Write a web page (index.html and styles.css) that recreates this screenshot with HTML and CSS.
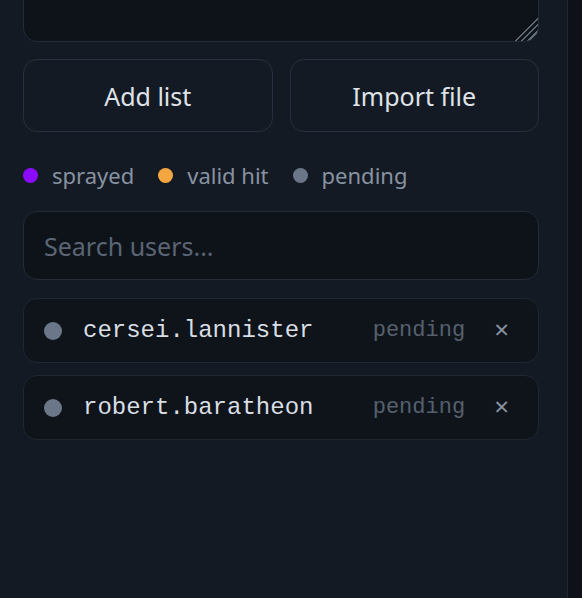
FILE: index.html
```html
<!doctype html>
<html>
<head>
<meta charset="utf-8">
<title>Targets</title>
<link rel="stylesheet" href="styles.css">
</head>
<body>
<div class="layout">
	<aside class="panel">
		<textarea class="bulk" spellcheck="false"></textarea>

		<div class="actions">
			<button class="btn">Add list</button>
			<button class="btn">Import file</button>
		</div>

		<ul class="legend">
			<li><span class="dot sprayed"></span>sprayed</li>
			<li><span class="dot hit"></span>valid hit</li>
			<li><span class="dot pending"></span>pending</li>
		</ul>

		<input class="search" type="text" placeholder="Search users...">

		<ul class="users">
			<li class="user">
				<span class="dot big pending"></span>
				<span class="name">cersei.lannister</span>
				<span class="state">pending</span>
				<button class="remove">×</button>
			</li>
			<li class="user">
				<span class="dot big pending"></span>
				<span class="name">robert.baratheon</span>
				<span class="state">pending</span>
				<button class="remove">×</button>
			</li>
		</ul>
	</aside>
	<div class="gutter"></div>
</div>
</body>
</html>
```

FILE: styles.css
```css
html, body{
	margin: 0;
	height: 100%;
	background: #141a23;
	overflow: hidden;
}

body{
	font-family: "Noto Sans", "Open Sans", sans-serif;
	color: #dfe3e9;
}

.layout{
	display: flex;
	height: 100%;
}

.panel{
	width: 568px;
	box-sizing: border-box;
	padding: 0 28px 0 23px;
	border-right: 1px solid #1f2732;
	background: #141a23;
}

.gutter{
	flex: 1;
	background: #0e1218;
}

/* paste box for the user list, scrolled past its top;
   the grip is drawn by hand: a triangle of the box colour over stripes */
.bulk{
	display: block;
	width: 100%;
	height: 62px;
	margin: -20px 0 0;
	box-sizing: border-box;
	background-color: #0e131a;
	background-image:
		linear-gradient(135deg, #0e131a 0 52%, transparent 52%),
		repeating-linear-gradient(135deg, transparent 0 3px, #626b78 3px 4.6px);
	background-size: 24px 24px;
	background-position: right 0 bottom 0;
	background-repeat: no-repeat;
	border: 1px solid #232c37;
	border-radius: 14px;
	color: #dfe3e9;
	resize: none;
	outline: none;
}

.actions{
	display: grid;
	grid-template-columns: 1fr 1fr;
	gap: 17px;
	margin-top: 17px;
}

.btn{
	height: 73px;
	background: #141a23;
	border: 1px solid #263040;
	border-radius: 14px;
	color: #dfe3e9;
	font-family: inherit;
	font-size: 25px;
}

.legend{
	display: flex;
	align-items: center;
	gap: 24px;
	height: 30px;
	margin: 28px 0 0;
	padding: 0;
	list-style: none;
	font-size: 22px;
	color: #8893a2;
}

.legend li{
	display: flex;
	align-items: center;
	gap: 14px;
}

.dot{
	width: 15px;
	height: 15px;
	border-radius: 50%;
	flex: none;
}

.dot.big{
	width: 18px;
	height: 18px;
}

.sprayed{ background: #8a0bff; }
.hit{ background: #f4a641; }
.pending{ background: #6b7788; }

.search{
	display: block;
	width: 100%;
	height: 69px;
	margin-top: 21px;
	box-sizing: border-box;
	padding: 0 20px;
	background: #0e131a;
	border: 1px solid #232c37;
	border-radius: 14px;
	color: #dfe3e9;
	font-family: inherit;
	font-size: 25px;
	outline: none;
}

.search::placeholder{
	color: #5b6574;
}

.users{
	display: flex;
	flex-direction: column;
	gap: 12px;
	margin: 18px 0 0;
	padding: 0;
	list-style: none;
}

.user{
	display: flex;
	align-items: center;
	height: 65px;
	box-sizing: border-box;
	padding: 0 29px 0 20px;
	background: #0f141b;
	border: 1px solid #1f2731;
	border-radius: 14px;
}

.name{
	flex: 1;
	margin-left: 21px;
	font-family: "Liberation Mono", monospace;
	font-size: 24px;
	color: #d9dee4;
}

.state{
	font-family: "Liberation Mono", monospace;
	font-size: 22px;
	color: #56606d;
}

.remove{
	margin: -3px 0 0 29px;
	padding: 0;
	background: none;
	border: none;
	color: #8792a0;
	font-family: inherit;
	font-size: 26px;
	line-height: 1;
}
```
